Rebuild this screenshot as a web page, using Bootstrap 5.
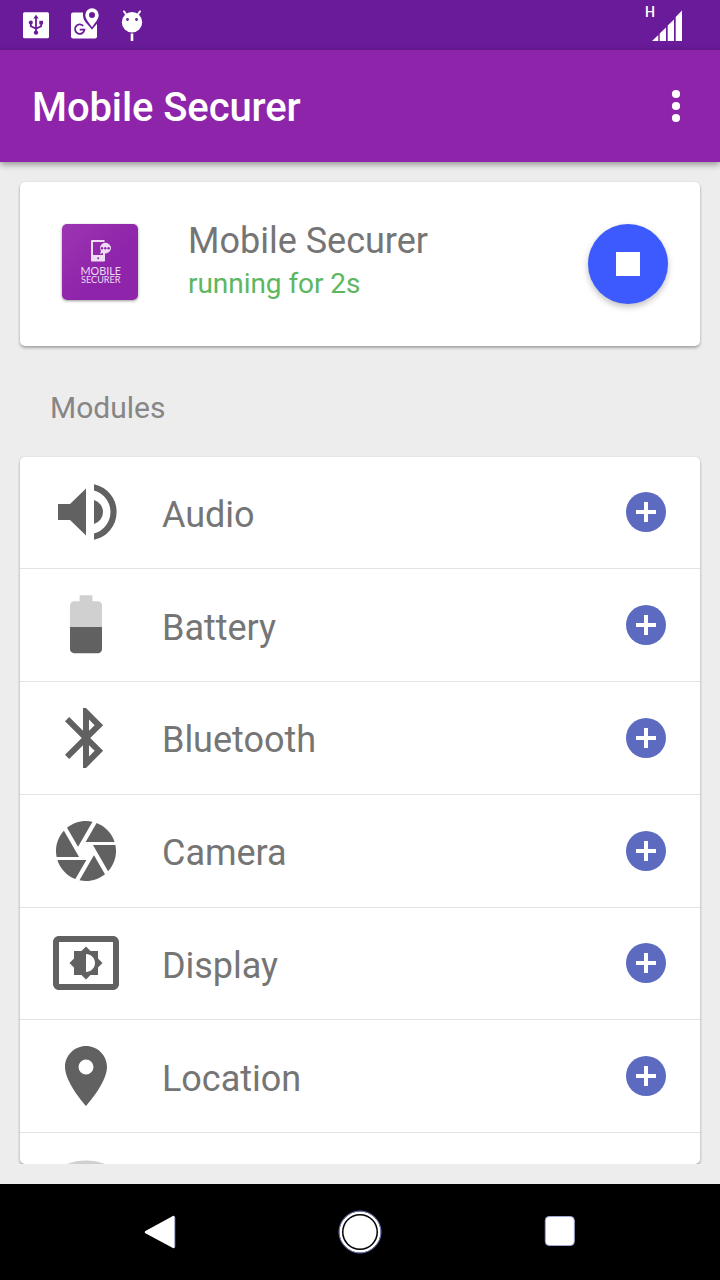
<!DOCTYPE html>
<html lang="en">
<head>
<meta charset="utf-8">
<meta name="viewport" content="width=device-width, initial-scale=1">
<title>Mobile Securer</title>
<link rel="stylesheet" href="https://cdn.jsdelivr.net/npm/bootstrap@5.3.0/dist/css/bootstrap.min.css">
<style>
  body { font-family: Roboto, "Liberation Sans", sans-serif; background: #ededed; color: #757575; }
  svg { display: block; flex: none; }
  .screen { width: 720px; height: 1280px; }
  .status-bar { height: 50px; background: #6a1b9a; padding: 0 38px 0 20px; }
  .app-bar { height: 112px; background: #8e24aa; padding: 0 24px 0 32px; box-shadow: 0 2px 7px rgba(0,0,0,.42); z-index: 1; }
  .app-title { font-size: 40px; font-weight: 500; line-height: 48px; letter-spacing: -.1px; padding-top: 4px; }
  .content-area { padding: 20px 20px 0; }
  .panel { border: 0; border-radius: 5px; box-shadow: 0 2px 3px rgba(0,0,0,.3), 0 0 2px rgba(0,0,0,.08); }
  .service { height: 164px; padding: 0 32px 0 42px; }
  .logo-tile { width: 76px; height: 76px; margin-top: -4px; border-radius: 5px; background: linear-gradient(135deg, #9c35b2, #8e24aa 60%); box-shadow: 0 1px 3px rgba(0,0,0,.4); }
  .service-name { font-size: 36px; line-height: 42px; }
  .service-state { font-size: 28px; line-height: 34px; letter-spacing: -.05px; color: #5db761; margin-top: 5px; }
  .service-text { margin: -8px 0 0 50px; }
  .stop-btn { width: 80px; height: 80px; background: #3d5afe; box-shadow: 0 3px 6px rgba(0,0,0,.25); --bs-btn-padding-x: 0; --bs-btn-padding-y: 0; }
  .stop-btn span { width: 24px; height: 24px; }
  .section-label { height: 110.6px; padding: 13px 0 0 30px; font-size: 30px; color: #868686; }
  .modules { overflow: hidden; clip-path: inset(-5px -5px 0 -5px); border-radius: 5px; }
  .module-item { flex: none; height: 112.75px; padding: 0 34px 0 30px; border: 0; border-bottom: 1px solid #e4e4e4; color: #757575; font-size: 36px; }
  .module-name { margin-left: 40px; padding-top: 5px; letter-spacing: -.03px; }
  .module-icon { fill: #616161; }
  .nav-keys { height: 96px; background: #000; margin-top: 20px; }
</style>
</head>
<body>
<div class="screen d-flex flex-column overflow-hidden">
  <div class="status-bar d-flex align-items-center justify-content-between flex-shrink-0">
    <svg width="130" height="50" viewBox="20 0 130 50" fill="#fff">
      <rect x="23" y="12.3" width="26" height="26" rx="1.5"/>
      <g stroke="#6a1b9a" stroke-width="1.8" fill="none"><path d="M36 33V17M30.8 22v4.2l5.2 2.4M41.2 22v4.2L36 28.600"/></g>
      <g fill="#6a1b9a"><path d="M33.300 18.500L36 14.800l2.700 3.700z"/><circle cx="36" cy="32.600" r="2.200"/><circle cx="30.800" cy="22.500" r="2"/><path d="M39.300 20.800h3.700v3.600h-3.700z"/></g>
      <rect x="71" y="12.500" width="26" height="26" rx="2"/>
      <path fill="#6a1b9a" d="M83 6h18v9c0 6-5 9-9 14.800-4-5.800-9-8-9-15z"/>
      <path fill-rule="evenodd" d="M92 8.300a6.700 6.700 0 0 1 6.700 6.700c0 4.500-4.700 8.800-6.700 12.300-2-3.500-6.700-7.800-6.700-12.300A6.700 6.700 0 0 1 92 8.300zm0 3.700a3 3 0 1 0 0 6 3 3 0 0 0 0-6z"/>
      <path d="M83.200 26a4.700 4.700 0 1 0 1.200 3.600h-4.700" fill="none" stroke="#6a1b9a" stroke-width="1.800"/>
      <circle cx="132" cy="22.300" r="10.200"/>
      <path d="M126.500 15l-2.500-3.600M137.500 15l2.500-3.600" stroke="#fff" stroke-width="1.900" stroke-linecap="round"/>
      <circle cx="127.500" cy="19.500" r="1.400" fill="#6a1b9a"/><circle cx="136.500" cy="19.500" r="1.400" fill="#6a1b9a"/>
      <path d="M130.700 33.500h2.600V41h-2.600z"/>
    </svg>
    <svg width="40" height="50" viewBox="642 0 40 50" fill="#fff">
      <text x="645" y="17" font-size="14" font-weight="500" textLength="10" lengthAdjust="spacingAndGlyphs" font-family="Roboto, sans-serif">H</text>
      <path d="M652 41l6.300-6v6zM659.700 33.500l6.300-6V41h-6.300zM667.700 25.500l6.300-6V41h-6.300zM675.700 17l6.300-6.500V41h-6.300z"/>
    </svg>
  </div>

  <nav class="app-bar navbar flex-nowrap flex-shrink-0 text-white">
    <span class="app-title">Mobile Securer</span>
    <svg width="40" height="48" viewBox="0 0 40 48" fill="#fff"><circle cx="20" cy="12" r="4.100"/><circle cx="20" cy="24" r="4.100"/><circle cx="20" cy="36" r="4.100"/></svg>
  </nav>

  <main class="content-area d-flex flex-column flex-grow-1 overflow-hidden">
    <section class="card panel service flex-row align-items-center flex-shrink-0">
      <div class="logo-tile">
        <svg width="76" height="76" viewBox="0 0 76 76" fill="#eedcf2">
          <path fill-rule="evenodd" d="M30 16h12.500v2H31v13h10v-2.300h2V36.500q0 1-1 1H30q-1 0-1-1V17q0-1 1-1zm6.200 17.200a1 1 0 1 0 0 2 1 1 0 0 0 0-2z"/>
          <path d="M43 18.800a5.800 5.300 0 1 1-2 10.200l-3 1 1-3a5.500 5.300 0 0 1 4-8.200z"/>
          <g fill="#8e24aa"><circle cx="40" cy="24.300" r="1.200"/><circle cx="43.300" cy="24.300" r="1.200"/><circle cx="46.600" cy="24.300" r="1.200"/></g>
          <g font-family="Lato, sans-serif"><text x="18.500" y="50.500" font-size="11.300" textLength="40.500" lengthAdjust="spacingAndGlyphs">MOBILE</text>
          <text x="19" y="59.300" font-size="9.600" textLength="39.500" lengthAdjust="spacingAndGlyphs">SECURER</text></g>
        </svg>
      </div>
      <div class="service-text flex-grow-1">
        <div class="service-name">Mobile Securer</div>
        <div class="service-state">running for 2s</div>
      </div>
      <button class="btn stop-btn rounded-circle border-0 d-flex align-items-center justify-content-center" type="button" aria-label="Stop"><span class="bg-white"></span></button>
    </section>

    <div class="section-label d-flex align-items-center flex-shrink-0">Modules</div>

    <div class="panel modules bg-white d-flex flex-column flex-grow-1">
      <div class="module-item d-flex align-items-center">
        <svg class="module-icon" width="72" height="72" viewBox="0 0 72 72"><path d="M8 28h12L36 12.500v47L20 44H8zM44 24a12.500 12.500 0 0 1 0 24zM44 8.200a28.400 28.400 0 0 1 0 55.600v-6.200a22.400 22.400 0 0 0 0-43.200z"/></svg>
        <span class="module-name flex-grow-1">Audio</span>
        <svg width="40" height="40" viewBox="0 0 40 40"><circle cx="20" cy="20" r="20" fill="#5c6bc0"/><path d="M18 10h4v8h8v4h-8v8h-4v-8h-8v-4h8z" fill="#fff"/></svg>
      </div>
      <div class="module-item d-flex align-items-center">
        <svg class="module-icon" width="72" height="72" viewBox="0 0 24 24"><path fill="#d0d0d0" d="M17 5.330C17 4.600 16.400 4 15.670 4H14V2h-4v2H8.330C7.600 4 7 4.600 7 5.330V13h10V5.330z" transform="matrix(1.067 0 0 1 -.8 .1)"/><path d="M6.670 12.700v7.400c0 .74.600 1.300 1.330 1.300h8c.74 0 1.330-.6 1.330-1.330V12.700z"/></svg>
        <span class="module-name flex-grow-1">Battery</span>
        <svg width="40" height="40" viewBox="0 0 40 40"><circle cx="20" cy="20" r="20" fill="#5c6bc0"/><path d="M18 10h4v8h8v4h-8v8h-4v-8h-8v-4h8z" fill="#fff"/></svg>
      </div>
      <div class="module-item d-flex align-items-center">
        <svg class="module-icon" width="72" height="72" viewBox="0 0 24 24"><path d="M17.710 7.710L12 2h-1v7.590L6.410 5 5 6.410 10.590 12 5 17.590 6.410 19 11 14.410V22h1l5.710-5.710-4.300-4.290 4.300-4.290zM13 5.830l1.880 1.880L13 9.590V5.830zm1.880 10.460L13 18.170v-3.760l1.880 1.880z"/></svg>
        <span class="module-name flex-grow-1">Bluetooth</span>
        <svg width="40" height="40" viewBox="0 0 40 40"><circle cx="20" cy="20" r="20" fill="#5c6bc0"/><path d="M18 10h4v8h8v4h-8v8h-4v-8h-8v-4h8z" fill="#fff"/></svg>
      </div>
      <div class="module-item d-flex align-items-center">
        <svg class="module-icon" width="72" height="72" viewBox="0 0 24 24"><path d="M9.400 10.500l4.770-8.260C13.470 2.090 12.750 2 12 2c-2.400 0-4.600.85-6.320 2.250l3.660 6.350.06-.1zM21.540 9c-.92-2.920-3.150-5.260-6-6.340L11.880 9h9.660zm.26 1h-7.490l.29.500 4.760 8.250C21 16.970 22 14.610 22 12c0-.69-.07-1.350-.2-2zM8.540 12l-3.900-6.750C3.010 7.030 2 9.390 2 12c0 .69.070 1.350.2 2h7.490l-1.150-2zm-6.080 3c.92 2.920 3.150 5.260 6 6.340L12.120 15H2.460zm11.270 0l-3.900 6.760c.7.150 1.420.24 2.170.24 2.400 0 4.600-.85 6.320-2.250l-3.660-6.350-.93 1.600z"/></svg>
        <span class="module-name flex-grow-1">Camera</span>
        <svg width="40" height="40" viewBox="0 0 40 40"><circle cx="20" cy="20" r="20" fill="#5c6bc0"/><path d="M18 10h4v8h8v4h-8v8h-4v-8h-8v-4h8z" fill="#fff"/></svg>
      </div>
      <div class="module-item d-flex align-items-center">
        <svg class="module-icon" width="72" height="72" viewBox="0 0 24 24"><path d="M21 3H3c-1.110 0-2 .89-2 2v14c0 1.100.89 2 2 2h18c1.100 0 2-.9 2-2V5c0-1.110-.9-2-2-2zm0 16.010H3V4.990h18v14.020zM8 16h2.500l1.500 1.500 1.500-1.500H16v-2.500l1.500-1.500-1.500-1.500V8h-2.500L12 6.500 10.500 8H8v2.500L6.500 12 8 13.500V16zm4-7c1.660 0 3 1.340 3 3s-1.340 3-3 3V9z"/></svg>
        <span class="module-name flex-grow-1">Display</span>
        <svg width="40" height="40" viewBox="0 0 40 40"><circle cx="20" cy="20" r="20" fill="#5c6bc0"/><path d="M18 10h4v8h8v4h-8v8h-4v-8h-8v-4h8z" fill="#fff"/></svg>
      </div>
      <div class="module-item d-flex align-items-center">
        <svg class="module-icon" width="72" height="72" viewBox="0 0 24 24"><path d="M12 2C8.130 2 5 5.130 5 9c0 5.250 7 13 7 13s7-7.750 7-13c0-3.870-3.130-7-7-7zm0 9.500a2.500 2.500 0 0 1 0-5 2.500 2.500 0 0 1 0 5z"/></svg>
        <span class="module-name flex-grow-1">Location</span>
        <svg width="40" height="40" viewBox="0 0 40 40"><circle cx="20" cy="20" r="20" fill="#5c6bc0"/><path d="M18 10h4v8h8v4h-8v8h-4v-8h-8v-4h8z" fill="#fff"/></svg>
      </div>
      <div class="module-item d-flex align-items-center">
        <svg width="72" height="72" viewBox="0 0 72 72"><path fill="#d0d0d0" d="M36 64L1 20C12 11.500 24 7.500 36 7.500S60 11.500 71 20z"/></svg>
      </div>
    </div>
  </main>

  <div class="nav-keys flex-shrink-0">
    <svg width="720" height="96" viewBox="0 0 720 96" fill="#fff">
      <path d="M146 48.200L173.500 33v30z" stroke="#fff" stroke-width="2.500" stroke-linejoin="round"/>
      <circle cx="360" cy="48" r="16.500"/><circle cx="360" cy="48" r="19.300" fill="none" stroke="#fff" stroke-width="2.600"/>
      <circle cx="360" cy="48" r="21" fill="none" stroke="#7986cb" stroke-width=".9"/>
      <rect x="545.300" y="32.500" width="29" height="29" rx="4" stroke="#9fa8da"/>
      <path d="M174.800 33v30" stroke="#9fa8da" stroke-width=".8"/>
    </svg>
  </div>
</div>
<script src="https://cdn.jsdelivr.net/npm/bootstrap@5.3.0/dist/js/bootstrap.bundle.min.js"></script>
</body>
</html>
